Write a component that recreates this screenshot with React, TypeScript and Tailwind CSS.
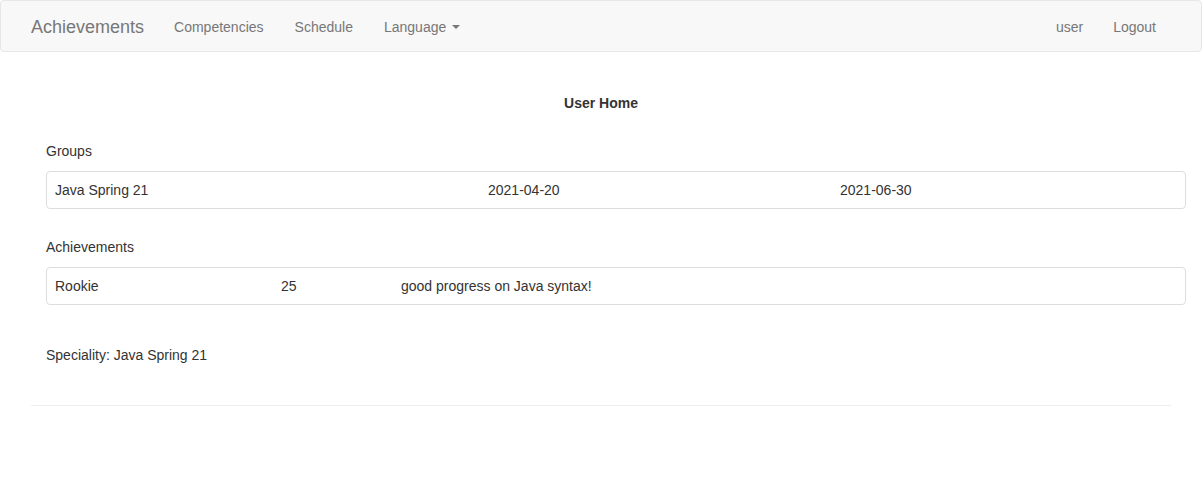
import React from "react";

const groups = [{ name: "Java Spring 21", start: "2021-04-20", end: "2021-06-30" }];
const achievements = [{ title: "Rookie", points: "25", comment: "good progress on Java syntax!" }];

export default function App() {
  return (
    <div className="min-h-screen bg-white text-[14px] leading-[20px] text-[#333] font-['Liberation_Sans',Arial,sans-serif]">
      {/* Navbar */}
      <nav className="h-[52px] border border-[#e7e7e7] bg-[#f8f8f8] rounded-[4px]">
        <div className="mx-auto w-[1170px] px-[15px] pt-[2px] flex items-center h-full">
          <a className="text-[18px] text-[#777] pr-[15px] leading-[20px]">Achievements</a>
          <ul className="flex text-[#777]">
            <li className="px-[15px]">Competencies</li>
            <li className="px-[16px]">Schedule</li>
            <li className="px-[15px] flex items-center">
              Language
              <span className="ml-[6px] inline-block w-0 h-0 border-x-[4px] border-x-transparent border-t-[4px] border-t-[#777]" />
            </li>
          </ul>
          <ul className="flex ml-auto text-[#777]">
            <li className="px-[15px]">user</li>
            <li className="px-[15px]">Logout</li>
          </ul>
        </div>
      </nav>

      {/* Content */}
      <div className="mx-auto w-[1170px] px-[15px] pt-[41px]">
        <h4 className="text-center font-bold">User Home</h4>

        <div className="pl-[15px] mr-[-15px]">
          <p className="mt-[28px]">Groups</p>
          <div className="mt-[10px] border border-[#ddd] rounded-[4px]">
            {groups.map((g) => (
              <div key={g.name} className="flex px-[8px] py-[8px]">
                <span className="w-[433px]">{g.name}</span>
                <span className="w-[352px]">{g.start}</span>
                <span>{g.end}</span>
              </div>
            ))}
          </div>

          <p className="mt-[28px]">Achievements</p>
          <div className="mt-[10px] border border-[#ddd] rounded-[4px]">
            {achievements.map((a) => (
              <div key={a.title} className="flex px-[8px] py-[8px]">
                <span className="w-[226px]">{a.title}</span>
                <span className="w-[120px]">{a.points}</span>
                <span>{a.comment}</span>
              </div>
            ))}
          </div>

          <p className="mt-[40px]">Speciality: Java Spring 21</p>
        </div>

        <hr className="mt-[40px] border-t border-[#eee]" />
      </div>
    </div>
  );
}
